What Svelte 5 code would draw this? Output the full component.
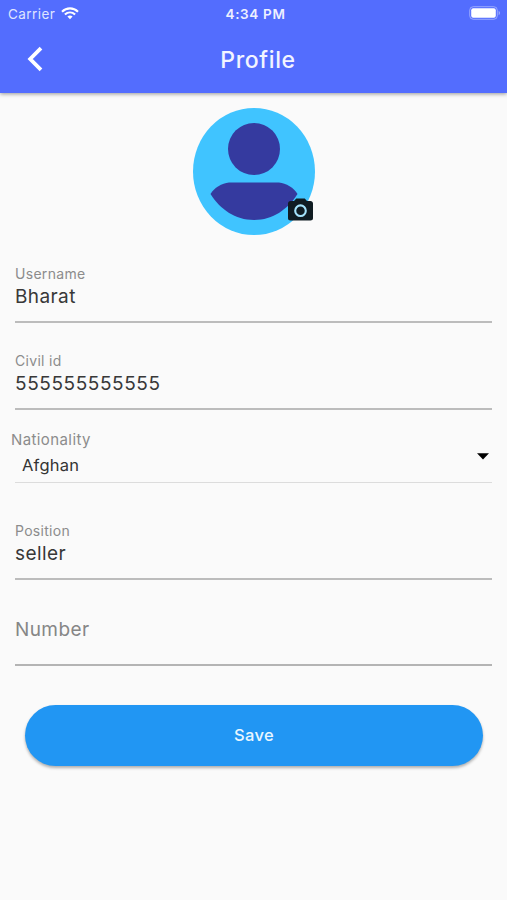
<script>
    let username = 'Bharat';
    let civilId = '555555555555';
    let nationality = 'Afghan';
    let position = 'seller';
</script>

<div class="screen">
    <header>
        <div class="status">
            <div class="carrier">
                <span>Carrier</span>
                <svg width="18" height="13" viewBox="0 0 18 13" fill="none" stroke="#fff" stroke-width="2.1">
                    <path d="M1 4.7C5.6.2 12.4.2 17 4.7" />
                    <path d="M3.9 7.6c3-2.9 7.2-2.9 10.2 0" />
                    <path d="M6.4 9.6c1.6-1.4 3.6-1.4 5.2 0L9 12.3z" fill="#fff" stroke="none" />
                </svg>
            </div>
            <span class="time">4:34 PM</span>
            <svg class="battery" width="32" height="14" viewBox="0 0 32 14">
                <rect x="0.7" y="0.7" width="27.6" height="12.6" rx="3.6" fill="none" stroke="#fff" stroke-opacity="0.4" />
                <rect x="2.2" y="2.2" width="24.6" height="9.6" rx="2" fill="#fff" />
                <path d="M29.7 4.8c1.6.8 1.6 3.6 0 4.4z" fill="#fff" fill-opacity="0.5" />
            </svg>
        </div>
        <div class="bar">
            <button class="back" aria-label="Back">
                <svg width="16" height="26" viewBox="0 0 16 26">
                    <path d="M14 2.2L3.2 13 14 23.8" fill="none" stroke="#fff" stroke-width="3.8" />
                </svg>
            </button>
            <h1>Profile</h1>
        </div>
    </header>

    <main>
        <div class="avatar">
            <svg width="122" height="127" viewBox="0 0 122 127">
                <ellipse cx="61" cy="63.5" rx="61" ry="63.5" fill="#40c4ff" />
                <circle cx="61" cy="41" r="26" fill="#353a9f" />
                <path d="M36 74.5H86C93 75 101 80 104.5 86C95 101 80 112 61 112C42 112 27 101 17.5 86C21 80 29 75 36 74.5Z" fill="#353a9f" />
            </svg>
            <svg class="camera" width="25" height="23" viewBox="0 0 25 23">
                <path d="M8.3.5h8.4L19 3h3.5C23.9 3 25 4.1 25 5.4v14.8c0 1.3-1.1 2.3-2.5 2.3h-20C1.1 22.5 0 21.5 0 20.2V5.4C0 4.1 1.1 3 2.5 3H6z" fill="#101c22" />
                <circle cx="12.5" cy="12.7" r="5.3" fill="#101c22" stroke="#a5e3fb" stroke-width="2.1" />
            </svg>
        </div>

        <div class="field">
            <span class="label">Username</span>
            <span class="value">{username}</span>
        </div>
        <div class="field civil">
            <span class="label">Civil id</span>
            <span class="value digits">{civilId}</span>
        </div>
        <div class="select">
            <span class="label">Nationality</span>
            <div class="choice">
                <span>{nationality}</span>
                <svg width="12" height="7" viewBox="0 0 12 7"><path d="M0 .3h12L6 6.5z" /></svg>
            </div>
        </div>
        <div class="field position">
            <span class="label">Position</span>
            <span class="value">{position}</span>
        </div>
        <div class="field empty">
            <span class="value placeholder">Number</span>
        </div>

        <button class="save">Save</button>
    </main>
</div>

<style>
    :global(body) {
        margin: 0;
        background: #fafafa;
    }

    .screen {
        height: 900px;
        background: #fafafa;
        color: #333;
        font-family: Inter, Roboto, sans-serif;
    }

    button {
        padding: 0;
        border: none;
        background: none;
        font-family: inherit;
    }

    svg {
        display: block;
    }

    header {
        height: 93px;
        background: #536dfe;
        color: #fff;
        box-shadow: 0 1px 4px rgba(0, 0, 0, 0.4);
    }

    .status {
        display: grid;
        grid-template-columns: 1fr auto 1fr;
        align-items: center;
        height: 27px;
        padding: 0 6px 0 8px;
        font-size: 13.5px;
    }

    .carrier {
        display: flex;
        align-items: center;
        gap: 6px;
        color: #dfe4ff;
        letter-spacing: 0.45px;
    }

    .time {
        padding-left: 2px;
        font-size: 13.5px;
        font-weight: 600;
        line-height: 26px;
        letter-spacing: 0.65px;
        color: #eef0ff;
    }

    .battery {
        justify-self: end;
        margin-top: -1px;
    }

    .bar {
        display: grid;
        grid-template-columns: 60px 1fr 60px;
        align-items: center;
        height: 64px;
    }

    .back {
        padding-left: 27px;
    }

    h1 {
        margin: 0;
        padding: 1px 0 0 9px;
        text-align: center;
        font-size: 23px;
        font-weight: 500;
        line-height: 30px;
        letter-spacing: 0.65px;
        color: #f2f4ff;
    }

    main {
        display: flex;
        flex-direction: column;
        padding: 15px 15px 0;
    }

    .avatar {
        position: relative;
        align-self: center;
        width: 122px;
        height: 127px;
        margin-bottom: 28px;
    }

    .camera {
        position: absolute;
        right: 2px;
        bottom: 14px;
    }

    .field {
        display: flex;
        flex-direction: column;
        box-sizing: border-box;
        height: 60px;
        padding-top: 1px;
        border-bottom: 2px solid #bcbcbc;
    }

    .civil {
        margin-top: 27px;
    }

    .position {
        margin-top: 37px;
    }

    .label {
        font-size: 14px;
        line-height: 20px;
        letter-spacing: 0.3px;
        color: #8c8c8c;
    }

    .value {
        font-size: 19px;
        line-height: 26px;
        letter-spacing: 0.4px;
        color: #383838;
    }

    .digits {
        letter-spacing: 0.58px;
    }

    .select {
        display: flex;
        flex-direction: column;
        margin-top: 20px;
        height: 52px;
        border-bottom: 1px solid #dcdcdc;
    }

    .select .label {
        margin-left: -4px;
        font-size: 15px;
        letter-spacing: 0.4px;
    }

    .choice {
        display: flex;
        justify-content: space-between;
        padding: 0 3px 0 7px;
        font-size: 16.5px;
        line-height: 30px;
        letter-spacing: 0.2px;
    }

    .choice svg {
        margin-top: 3px;
    }

    .empty {
        justify-content: center;
        height: 86px;
        border-color: #b4b4b4;
    }

    .placeholder {
        margin-top: 15px;
        color: #868686;
    }

    .save {
        height: 61px;
        margin: 39px 9px 0 10px;
        padding-bottom: 2px;
        border-radius: 31px;
        background: #2196f3;
        box-shadow: 0 2px 3px rgba(0, 0, 0, 0.3);
        color: #e9f6ff;
        font-size: 16.5px;
        font-weight: 500;
        letter-spacing: 0.3px;
    }
</style>
